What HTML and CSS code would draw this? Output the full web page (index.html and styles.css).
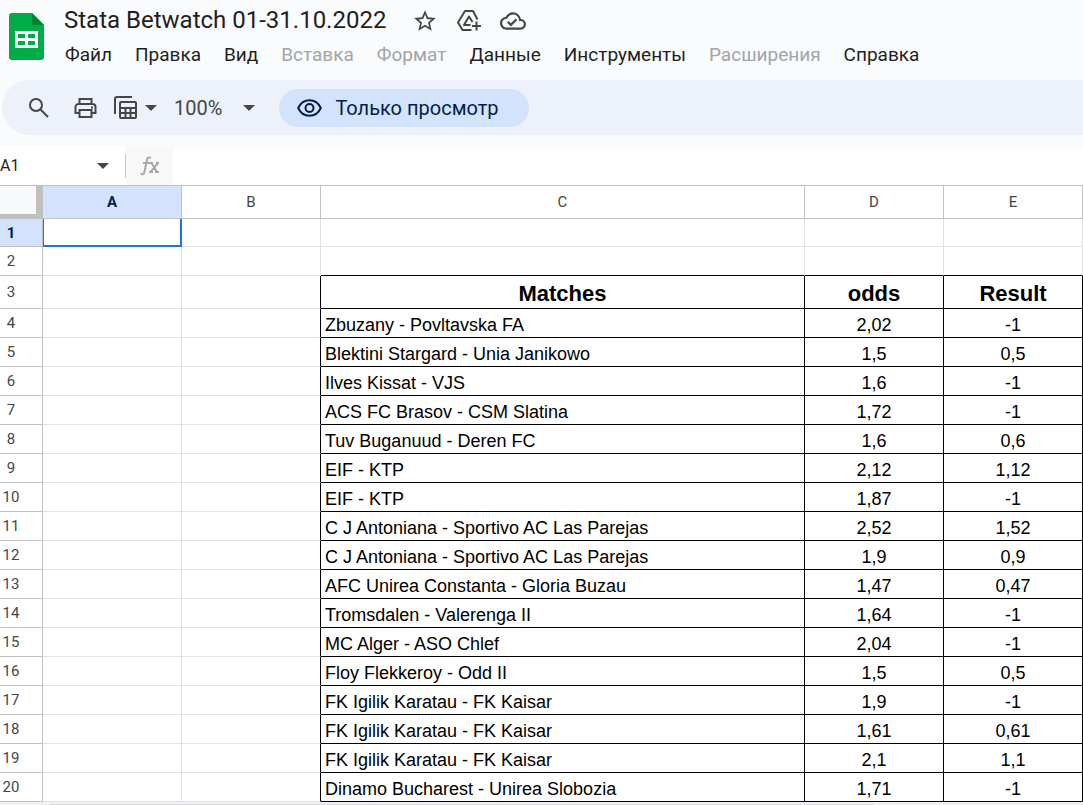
FILE: index.html
```html
<!DOCTYPE html>
<html lang="ru">
<head>
<meta charset="utf-8">
<title>Stata Betwatch 01-31.10.2022</title>
<link rel="stylesheet" href="styles.css">
</head>
<body>
<header class="top">
  <svg class="logo" viewBox="0 0 35 47" aria-hidden="true">
    <path fill="#00ac47" d="M3 0h20l12 12v32a3 3 0 0 1-3 3H3a3 3 0 0 1-3-3V3a3 3 0 0 1 3-3z"/>
    <path fill="#00832d" d="M23 0l12 12H23z"/>
    <path fill="#fff" fill-rule="evenodd" d="M6 18h23v17H6zM9 21v4h7v-4zM19 21v4h7v-4zM9 28v4h7v-4zM19 28v4h7v-4z"/>
  </svg>
  <div class="heading">
    <div class="title-row">
      <h1 class="title">Stata Betwatch 01-31.10.2022</h1>
      <div class="title-actions">
        <button class="icon-btn" aria-label="Пометить"><svg width="26" height="26" viewBox="0 0 24 24"><path fill="#444746" d="M22 9.240l-7.190-.62L12 2 9.190 8.630 2 9.240l5.460 4.730L5.820 21 12 17.270 18.180 21l-1.630-7.030L22 9.240zM12 15.400l-3.760 2.270 1-4.280-3.320-2.880 4.380-.38L12 6.100l1.710 4.040 4.380.38-3.320 2.880 1 4.280L12 15.400z"/></svg></button>
        <button class="icon-btn" aria-label="Добавить на Диск"><svg width="26" height="26" viewBox="0 0 26 26" fill="none" stroke="#444746" stroke-width="2" stroke-linejoin="round"><path d="M15.500 22H6.500L2 14.500 9 3h8l4.500 8.500"/><path d="M14.500 17H8l5-8.500 3.500 5.500"/><path d="M20.500 13.500v9M16 18h9"/></svg></button>
        <button class="icon-btn" aria-label="Сохранено"><svg width="26" height="26" viewBox="0 0 24 24"><path fill="#444746" d="M19.350 10.040A7.490 7.490 0 0 0 12 4C9.110 4 6.600 5.640 5.350 8.040A5.994 5.994 0 0 0 0 14c0 3.310 2.690 6 6 6h13c2.760 0 5-2.240 5-5 0-2.640-2.050-4.780-4.650-4.960zM19 18H6c-2.210 0-4-1.790-4-4 0-2.050 1.530-3.760 3.560-3.970l1.070-.11.5-.95A5.469 5.469 0 0 1 12 6c2.620 0 4.880 1.860 5.390 4.430l.3 1.500 1.530.11A2.980 2.980 0 0 1 22 15c0 1.650-1.350 3-3 3zm-9-3.820l-2.090-2.090L6.500 13.500 10 17l6.010-6.010-1.410-1.410z"/></svg></button>
      </div>
    </div>
    <nav class="menu">
      <button>Файл</button>
      <button>Правка</button>
      <button>Вид</button>
      <button disabled>Вставка</button>
      <button disabled>Формат</button>
      <button>Данные</button>
      <button>Инструменты</button>
      <button disabled>Расширения</button>
      <button>Справка</button>
    </nav>
  </div>
</header>

<div class="toolbar" role="toolbar">
  <button class="icon-btn search" aria-label="Поиск"><svg width="20" height="20" viewBox="0 0 20 20" fill="none" stroke="#444746" stroke-width="2"><circle cx="7" cy="7" r="6"/><path d="M11 11l8 8"/></svg></button>
  <button class="icon-btn print" aria-label="Печать"><svg width="23" height="20" viewBox="0 0 23 20" fill="none" stroke="#444746" stroke-width="2"><path d="M5.500 6V1h12v5M5.500 15H1.500V9a3 3 0 0 1 3-3h14a3 3 0 0 1 3 3v6h-4"/><path d="M5.500 12h12v7h-12z"/><path d="M17 9.500h2"/></svg></button>
  <button class="icon-btn filter" aria-label="Режимы фильтрации"><svg width="23" height="23" viewBox="0 0 23 23" fill="none" stroke="#444746" stroke-width="2"><path d="M1 18V3a2 2 0 0 1 2-2h15"/><rect x="6" y="6" width="16" height="16" rx="1"/><path d="M6 12h16M6 17h16M11.500 12v10M16.500 12v10"/></svg><span class="caret"></span></button>
  <button class="icon-btn zoom">100%<span class="caret"></span></button>
  <button class="view-only"><svg width="25" height="18" viewBox="0 0 25 18" fill="none" stroke="#041e49" stroke-width="2"><path d="M1.200 9C3.500 4 7.500 1.200 12.500 1.200S21.500 4 23.800 9C21.500 14 17.500 16.800 12.500 16.800S3.500 14 1.200 9z"/><circle cx="12.500" cy="9" r="4"/></svg>Только просмотр</button>
</div>

<div class="formula-bar">
  <button class="name-box">A1<span class="caret"></span></button>
  <div class="fx"><svg width="20" height="20" viewBox="0 0 20 20" fill="none" stroke="#a8a8a8" stroke-width="2"><path d="M11 2C8.500.5 7.500 2 7 4L4.500 15.500C4 18 3 19 .5 17.500M3 7h7"/><path d="M10 7h3M16 7h3M9 16h4M15 16h4M11.500 7l5.500 9M18 7l-7.500 9"/></svg></div>
  <input class="formula" aria-label="Формула">
</div>

<table class="sheet">
  <colgroup><col class="c-num"><col class="c-std"><col class="c-std"><col><col class="c-std"><col class="c-std"></colgroup>
  <thead>
    <tr><th class="corner"></th><th class="active">A</th><th>B</th><th>C</th><th>D</th><th>E</th></tr>
  </thead>
  <tbody>
    <tr class="first"><th class="active">1</th><td class="selected"></td><td></td><td></td><td></td><td></td></tr>
    <tr class="above"><th>2</th><td></td><td></td><td></td><td></td><td></td></tr>
  </tbody>
  <tbody class="data">
    <tr class="names"><th>3</th><td></td><td></td><td>Matches</td><td>odds</td><td>Result</td></tr>
    <tr><th>4</th><td></td><td></td><td>Zbuzany - Povltavska FA</td><td>2,02</td><td>-1</td></tr>
    <tr><th>5</th><td></td><td></td><td>Blektini Stargard - Unia Janikowo</td><td>1,5</td><td>0,5</td></tr>
    <tr><th>6</th><td></td><td></td><td>Ilves Kissat - VJS</td><td>1,6</td><td>-1</td></tr>
    <tr><th>7</th><td></td><td></td><td>ACS FC Brasov - CSM Slatina</td><td>1,72</td><td>-1</td></tr>
    <tr><th>8</th><td></td><td></td><td>Tuv Buganuud - Deren FC</td><td>1,6</td><td>0,6</td></tr>
    <tr><th>9</th><td></td><td></td><td>EIF - KTP</td><td>2,12</td><td>1,12</td></tr>
    <tr><th>10</th><td></td><td></td><td>EIF - KTP</td><td>1,87</td><td>-1</td></tr>
    <tr><th>11</th><td></td><td></td><td>C J Antoniana - Sportivo AC Las Parejas</td><td>2,52</td><td>1,52</td></tr>
    <tr><th>12</th><td></td><td></td><td>C J Antoniana - Sportivo AC Las Parejas</td><td>1,9</td><td>0,9</td></tr>
    <tr><th>13</th><td></td><td></td><td>AFC Unirea Constanta - Gloria Buzau</td><td>1,47</td><td>0,47</td></tr>
    <tr><th>14</th><td></td><td></td><td>Tromsdalen - Valerenga II</td><td>1,64</td><td>-1</td></tr>
    <tr><th>15</th><td></td><td></td><td>MC Alger - ASO Chlef</td><td>2,04</td><td>-1</td></tr>
    <tr><th>16</th><td></td><td></td><td>Floy Flekkeroy - Odd II</td><td>1,5</td><td>0,5</td></tr>
    <tr><th>17</th><td></td><td></td><td>FK Igilik Karatau - FK Kaisar</td><td>1,9</td><td>-1</td></tr>
    <tr><th>18</th><td></td><td></td><td>FK Igilik Karatau - FK Kaisar</td><td>1,61</td><td>0,61</td></tr>
    <tr><th>19</th><td></td><td></td><td>FK Igilik Karatau - FK Kaisar</td><td>2,1</td><td>1,1</td></tr>
    <tr><th>20</th><td></td><td></td><td>Dinamo Bucharest - Unirea Slobozia</td><td>1,71</td><td>-1</td></tr>
  </tbody>
</table>
<div class="scroll-strip"><div class="scroll-thumb"></div></div>
</body>
</html>
```
FILE: styles.css
```css
* { box-sizing: border-box; }
body {
  margin: 0;
  background: #f9fbfd;
  color: #1f1f1f;
  font-family: Roboto, sans-serif;
  overflow: hidden;
}
button {
  border: 0;
  padding: 0;
  background: none;
  color: inherit;
  font: inherit;
  white-space: nowrap;
}
svg { display: block; }

.top { display: flex; gap: 20px; padding: 4px 9px 0; height: 80px; }
.logo { width: 35px; height: 47px; margin-top: 9px; flex: none; }
.title-row { display: flex; align-items: center; gap: 26px; height: 32px; }
.title { margin: 0; font-size: 24px; font-weight: 400; line-height: 32px; white-space: nowrap; }
.title-actions { display: flex; gap: 18px; padding-top: 2px; }
.menu { display: flex; gap: 23px; margin-top: 7px; padding-left: 1px; font-size: 19px; line-height: 24px; }
.menu button:disabled { color: #a2a4a7; }

.toolbar {
  display: flex;
  align-items: center;
  height: 55px;
  margin-left: 2px;
  padding-left: 27px;
  border-radius: 28px 0 0 28px;
  background: #ecf1fa;
  color: #444746;
}
.icon-btn { display: flex; align-items: center; }
.print { margin-left: 25px; }
.filter { margin-left: 17px; gap: 8px; }
.zoom { margin-left: 17px; gap: 21px; font-size: 20px; }
.caret {
  border: 6px solid transparent;
  border-top-color: #444746;
  border-bottom: 0;
}
.view-only {
  display: flex;
  align-items: center;
  gap: 13px;
  height: 38px;
  margin-left: 24px;
  padding: 0 30px 0 18px;
  border-radius: 19px;
  background: #d3e3fd;
  color: #041e49;
  font-size: 20px;
}

.formula-bar { display: flex; height: 39px; margin-top: 11px; background: #fff; }
.name-box {
  display: flex;
  align-items: center;
  justify-content: space-between;
  width: 126px;
  padding-right: 17px;
  font-size: 16px;
  background: linear-gradient(#c7c7c7, #c7c7c7) right center / 1px 24px no-repeat;
}
.fx { display: flex; align-items: center; justify-content: center; width: 47px; background: #f8f8f8; }
.formula { flex: 1; min-width: 0; border: 0; border-top: 3px solid #f9fbfd; background: #fff; }

.sheet {
  width: 100%;
  table-layout: fixed;
  border-collapse: separate;
  border-spacing: 0;
  border-top: 1px solid #c0c0c0;
  background: #fff;
  color: #000;
  font-family: "Liberation Sans", Arial, sans-serif;
  font-size: 18px;
}
.c-num { width: 43px; }
.c-std { width: 139px; }
.sheet th, .sheet td {
  height: 29px;
  padding: 4px 4px 0;
  border-right: 1px solid #e1e1e1;
  border-bottom: 1px solid #e1e1e1;
  line-height: 20px;
  text-align: center;
  white-space: nowrap;
}
.sheet th {
  padding: 0;
  border-color: #c0c0c0;
  color: #444746;
  font-family: Roboto, sans-serif;
  font-size: 15px;
  font-weight: 400;
}
.sheet thead th { height: 33px; }
.sheet tbody th { padding-right: 20px; }
.sheet .first th, .sheet .first td { height: 28px; }
.sheet th.active { background: #d3e3fd; color: #041e49; font-weight: 700; }
.sheet .corner { border-right: 7px solid #c0c0c0; border-bottom: 5px solid #c0c0c0; background: #f8f9fa; }
.sheet td.selected { border-right: 2px solid #1a73e8; border-bottom: 2px solid #1a73e8; box-shadow: inset 1px 0 #1a73e8; }
.above td:nth-child(n+4) { border-bottom-color: #000; }
.data td:nth-child(n+3) { border-right-color: #000; }
.data td:nth-child(n+4) { border-bottom-color: #000; }
.data td:nth-child(4) { text-align: left; }
.sheet .names th, .sheet .names td { height: 33px; }
.sheet .names td { font-size: 22px; font-weight: 700; line-height: 26px; text-align: center; }

.scroll-strip { height: 12px; padding: 2px 0 0 48px; background: #f1f1f1; }
.scroll-thumb { width: 80%; height: 8px; border-radius: 4px; background: #dadce0; }
```
